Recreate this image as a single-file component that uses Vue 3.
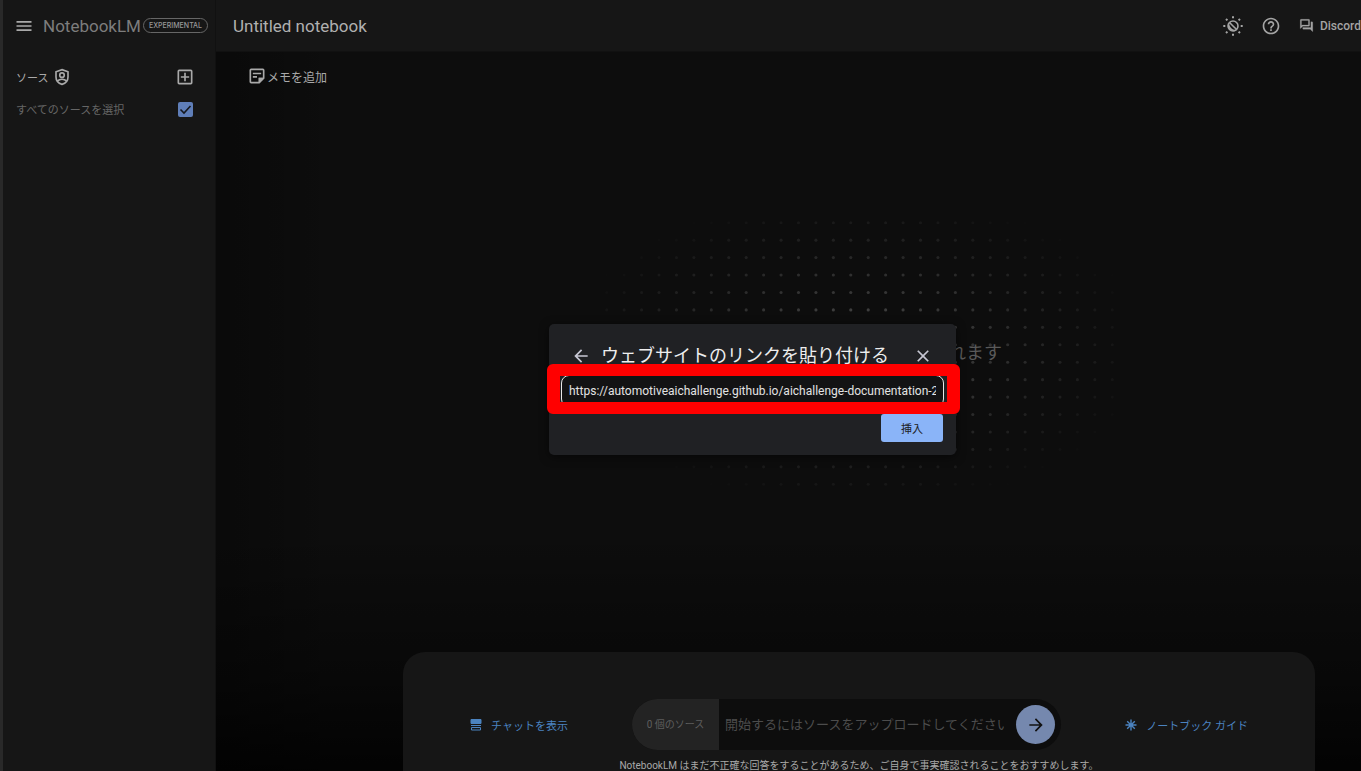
<script setup>
import { ref } from 'vue'

const url = ref('https://automotiveaichallenge.github.io/aichallenge-documentation-2024/')
const allSources = ref(true)
const question = ref('')

const dots = []
for (let row = 0; row < 16; row++) {
  for (let col = 0; col < 30; col++) {
    const distance = Math.hypot((col - 14.5) / 17, (row - 7.3) / 9.2)
    const opacity = 0.27 * (1 - distance)
    if (opacity > 0.005) dots.push({ x: col * 10 + 5, y: row * 10 + 5, opacity })
  }
}
</script>

<template>
  <div class="app">
    <aside class="sidebar">
      <div class="brand">
        <button class="icon-btn" type="button" aria-label="メニュー">
          <svg width="20" height="20" viewBox="0 0 24 24" fill="currentColor"><path d="M3 18h18v-2H3v2zm0-5h18v-2H3v2zm0-7v2h18V6H3z" /></svg>
        </button>
        <span class="brand-name">NotebookLM</span>
        <span class="badge">EXPERIMENTAL</span>
      </div>
      <div class="side-row sources">
        <span>ソース</span>
        <svg class="shield" width="18" height="18" viewBox="0 0 24 24" fill="none" stroke="currentColor" stroke-width="2.2">
          <path d="M12 2.2 20 5v7c0 5-3.400 8.600-8 9.800C7.400 20.600 4 17 4 12V5z" />
          <circle cx="12" cy="9.500" r="3" />
          <path d="M6 17.500c1.500-1.800 3.600-2.500 6-2.500s4.500.7 6 2.500" />
        </svg>
        <button class="icon-btn end" type="button" aria-label="ソースを追加">
          <svg width="20" height="20" viewBox="0 0 24 24" fill="currentColor"><path d="M19 3H5a2 2 0 0 0-2 2v14a2 2 0 0 0 2 2h14a2 2 0 0 0 2-2V5a2 2 0 0 0-2-2zm0 16H5V5h14v14zm-8-2h2v-4h4v-2h-4V7h-2v4H7v2h4z" /></svg>
        </button>
      </div>
      <label class="side-row select-all">
        <span>すべてのソースを選択</span>
        <input v-model="allSources" type="checkbox" />
        <span class="tick">
          <svg v-if="allSources" width="15" height="15" viewBox="0 0 15 15" fill="none" stroke="#15181e" stroke-width="1.600"><path d="m2.500 7.500 3.500 3.500 6.500-7" /></svg>
        </span>
      </label>
    </aside>

    <main class="main">
      <header class="topbar">
        <h1>Untitled notebook</h1>
        <nav class="actions">
          <button class="icon-btn" type="button" aria-label="テーマを切り替え">
            <svg width="20" height="20" viewBox="0 0 20 20" fill="none" stroke="currentColor" stroke-width="1.600">
              <circle cx="10" cy="10" r="5" />
              <path d="M6.200 6c-.4 4.800 2.800 8.200 7.600 8l-2 1.200c-3.600.6-7.400-2.600-6.800-6.400z" fill="currentColor" stroke="none" />
              <path d="m6.500 6.500 7.300 7.300" />
              <path d="M10 .3v2M10 17.700v2M.3 10h2M17.700 10h2M3 3l1.400 1.400M15.600 15.600 17 17M3 17l1.400-1.400M15.600 4.400 17 3" stroke-width="2" />
            </svg>
          </button>
          <button class="icon-btn" type="button" aria-label="ヘルプ">
            <svg width="20" height="20" viewBox="0 0 24 24" fill="currentColor"><path d="M11 18h2v-2h-2v2zm1-16C6.480 2 2 6.480 2 12s4.480 10 10 10 10-4.480 10-10S17.520 2 12 2zm0 18c-4.410 0-8-3.590-8-8s3.590-8 8-8 8 3.590 8 8-3.590 8-8 8zm0-14c-2.210 0-4 1.790-4 4h2c0-1.100.9-2 2-2s2 .9 2 2c0 2-3 1.750-3 5h2c0-2.250 3-2.500 3-5 0-2.210-1.790-4-4-4z" /></svg>
          </button>
          <a class="discord" href="#">
            <svg width="15" height="15" viewBox="0 0 24 24" fill="currentColor"><path d="M15 4v7H5.170L4 12.170V4h11m1-2H3c-.55 0-1 .45-1 1v14l4-4h10c.55 0 1-.45 1-1V3c0-.55-.45-1-1-1zm5 4h-2v9H6v2c0 .55.45 1 1 1h11l4 4V7c0-.55-.45-1-1-1z" stroke="currentColor" stroke-width="0.300" /></svg>
            <span>Discord</span>
          </a>
        </nav>
      </header>

      <div class="workspace">
        <button class="add-note" type="button">
          <svg width="20" height="20" viewBox="0 0 24 24" fill="currentColor"><path d="M19 5v9h-5v5H5V5h14m0-2H5a2 2 0 0 0-2 2v14a2 2 0 0 0 2 2h10l6-6V5a2 2 0 0 0-2-2zm-7 11H7v-2h5v2zm5-4H7V8h10v2z" /><path d="M14 14h6l-6 6z" /></svg>
          <span>メモを追加</span>
        </button>

        <section class="stage">
          <svg class="dots" width="523" height="279" viewBox="0 0 300 160" preserveAspectRatio="none">
            <circle v-for="(dot, i) in dots" :key="i" :cx="dot.x" :cy="dot.y" r="0.900" fill="#fff" :fill-opacity="dot.opacity" />
          </svg>
          <p>れます</p>
        </section>

        <section class="composer">
          <div class="composer-row">
            <button class="link" type="button">
              <svg width="12" height="12" viewBox="0 0 12 12" fill="none" stroke="currentColor"><path d="M1 .5h10v4H1z" fill="currentColor" /><path d="M1 6.500h10M1.500 8.500h9v2.500h-9z" /></svg>
              <span>チャットを表示</span>
            </button>
            <form class="ask" @submit.prevent>
              <span class="count">0 個のソース</span>
              <input v-model="question" type="text" aria-label="質問" placeholder="開始するにはソースをアップロードしてください" />
              <button class="send" type="submit" aria-label="送信">
                <svg width="20" height="20" viewBox="0 0 24 24" fill="currentColor"><path d="m12 4-1.410 1.410L16.170 11H4v2h12.170l-5.580 5.590L12 20l8-8z" /></svg>
              </button>
            </form>
            <button class="link" type="button">
              <svg width="12" height="12" viewBox="0 0 12 12" fill="none" stroke="currentColor" stroke-width="1.400"><path d="M6 .5v11M.5 6h11M2.200 2.200l7.600 7.600M9.800 2.200 2.200 9.800" /></svg>
              <span>ノートブック ガイド</span>
            </button>
          </div>
          <p class="notice">NotebookLM はまだ不正確な回答をすることがあるため、ご自身で事実確認されることをおすすめします。</p>
        </section>
      </div>
    </main>

    <div class="overlay">
      <section class="dialog" role="dialog" aria-labelledby="dialog-title">
        <header class="dialog-head">
          <button class="icon-btn" type="button" aria-label="戻る">
            <svg width="20" height="20" viewBox="0 0 24 24" fill="currentColor"><path d="M20 11H7.830l5.590-5.590L12 4l-8 8 8 8 1.410-1.410L7.830 13H20z" /></svg>
          </button>
          <h2 id="dialog-title">ウェブサイトのリンクを貼り付ける</h2>
          <button class="icon-btn end" type="button" aria-label="閉じる">
            <svg width="20" height="20" viewBox="0 0 24 24" fill="currentColor"><path d="M19 6.410 17.590 5 12 10.590 6.410 5 5 6.410 10.590 12 5 17.590 6.410 19 12 13.410 17.590 19 19 17.590 13.410 12z" /></svg>
          </button>
        </header>
        <input v-model="url" class="url" type="text" aria-label="URL" />
        <button class="insert" type="button">挿入</button>
        <div class="highlight"></div>
      </section>
    </div>
  </div>
</template>

<style>
body {
  background: #000;
}
</style>

<style scoped>
.app {
  position: relative;
  display: flex;
  height: 100vh;
  overflow: hidden;
  background: #0d0d0d;
  color: #a9a9a9;
  font-family: Roboto, "Noto Sans CJK JP", sans-serif;
  font-size: 12px;
}
h1, h2, p {
  margin: 0;
  font-weight: 400;
}
button, input {
  margin: 0;
  padding: 0;
  border: 0;
  background: none;
  color: inherit;
  font: inherit;
}
svg {
  display: block;
  flex: none;
}
.icon-btn {
  display: flex;
}
.end {
  margin-left: auto;
}
.sidebar {
  box-sizing: border-box;
  flex: none;
  width: 216px;
  border-left: 3px solid #292929;
  border-right: 1px solid #111;
  background: #161616;
}
.brand {
  display: flex;
  align-items: center;
  height: 51px;
  padding-left: 11px;
}
.brand-name {
  margin-left: 9px;
  color: #7d7d7d;
  font-size: 17px;
}
.badge {
  margin-left: 2px;
  padding: 0 5px;
  border: 1px solid #666;
  border-radius: 8px;
  color: #999;
  font-family: Inter, sans-serif;
  font-size: 7px;
  font-weight: 500;
  line-height: 13px;
}
.side-row {
  display: flex;
  align-items: center;
  padding: 0 22px 0 13px;
  font-size: 11px;
}
.sources {
  height: 32px;
  margin-top: 10px;
  padding-right: 20px;
}
.shield {
  margin-left: 5px;
}
.select-all {
  position: relative;
  height: 32px;
  color: #666;
}
.select-all input {
  position: absolute;
  right: 22px;
  opacity: 0;
}
.tick {
  width: 15px;
  height: 15px;
  margin-left: auto;
  border-radius: 2px;
  background: #5f7eb8;
}
.main {
  display: flex;
  flex: 1;
  flex-direction: column;
  min-width: 0;
}
.topbar {
  display: flex;
  flex: none;
  align-items: center;
  justify-content: space-between;
  box-sizing: border-box;
  height: 52px;
  padding-left: 17px;
  border-bottom: 1px solid #111;
  background: #161616;
}
h1 {
  color: #b0b0b0;
  font-size: 17px;
}
.actions {
  display: flex;
  align-items: center;
  gap: 18px;
  color: #a4a4a4;
}
.discord {
  display: flex;
  align-items: center;
  gap: 6px;
  color: inherit;
  font-weight: 500;
  text-decoration: none;
}
.workspace {
  display: flex;
  flex: 1;
  flex-direction: column;
  min-height: 0;
  background:
    linear-gradient(to top, #000c, #0006 90px, #0000 240px),
    linear-gradient(to right, #0004, #0000 120px),
    #0d0d0d;
}
.add-note {
  display: flex;
  align-items: center;
  align-self: flex-start;
  height: 48px;
  margin-left: 31px;
}
.stage {
  position: relative;
  display: grid;
  flex: 1;
  place-items: center;
  margin: 0 46px 0 187px;
  padding-bottom: 46px;
  color: #5a5a5a;
  font-size: 18px;
}
.stage > * {
  grid-area: 1 / 1;
}
.stage p {
  padding: 0 0 4px 232px;
}
.composer {
  box-sizing: border-box;
  flex: none;
  height: 119px;
  margin: 0 46px 0 187px;
  padding: 47px 67px 0;
  border-radius: 22px 22px 0 0;
  background: #161616;
  overflow: hidden;
}
.composer-row {
  display: flex;
  align-items: center;
  justify-content: space-between;
}
.link {
  display: flex;
  align-items: center;
  gap: 9px;
  color: #4b83c0;
  font-size: 11px;
}
.ask {
  display: flex;
  align-items: center;
  box-sizing: border-box;
  width: 429px;
  height: 51px;
  padding-right: 6px;
  border-radius: 26px;
  background: #0d0d0d;
  overflow: hidden;
}
.count {
  flex: none;
  width: 87px;
  background: #232323;
  color: #5e5e5e;
  font-size: 10px;
  line-height: 51px;
  text-align: center;
}
.ask input {
  flex: 1;
  min-width: 0;
  margin: 0 12px 0 6px;
  outline: 0;
  font-size: 13px;
}
.ask input::placeholder {
  color: #4c4c4c;
  opacity: 1;
}
.send {
  display: grid;
  place-items: center;
  width: 39px;
  height: 39px;
  border-radius: 50%;
  background: #7588ae;
  color: #111;
}
.notice {
  margin-top: 8px;
  color: #a9a9a9;
  font-size: 10px;
  line-height: 16px;
  text-align: center;
  white-space: nowrap;
}
.overlay {
  position: absolute;
  inset: 0;
  display: grid;
  place-items: center;
  padding: 8px 0 0 144px;
}
.dialog {
  position: relative;
  display: flex;
  flex-direction: column;
  box-sizing: border-box;
  width: 407px;
  padding: 13px 13px;
  border-radius: 5px;
  background: #202124;
  box-shadow: 0 2px 10px #0008;
}
.dialog-head {
  display: flex;
  align-items: center;
  height: 38px;
  padding: 0 10px 0 9px;
  color: #c7c7d3;
}
h2 {
  margin-left: 10px;
  color: #eee;
  font-size: 18px;
  line-height: 38px;
  white-space: nowrap;
}
.url {
  box-sizing: border-box;
  height: 32px;
  margin: 0 -1px;
  padding: 0 7px;
  border: 1px solid #e8e8e8;
  border-radius: 8px;
  background: #131314;
  color: #e3e3e3;
  outline: 0;
}
.insert {
  align-self: flex-end;
  width: 62px;
  height: 28px;
  margin-top: 7px;
  border-radius: 3px;
  background: #8ab4f8;
  color: #202124;
  font-size: 11px;
}
.highlight {
  position: absolute;
  top: 40px;
  left: -2px;
  right: -4px;
  box-sizing: border-box;
  height: 50px;
  border: 13px solid #f00;
  border-width: 12px 13px;
  border-radius: 6px;
  pointer-events: none;
}
</style>
